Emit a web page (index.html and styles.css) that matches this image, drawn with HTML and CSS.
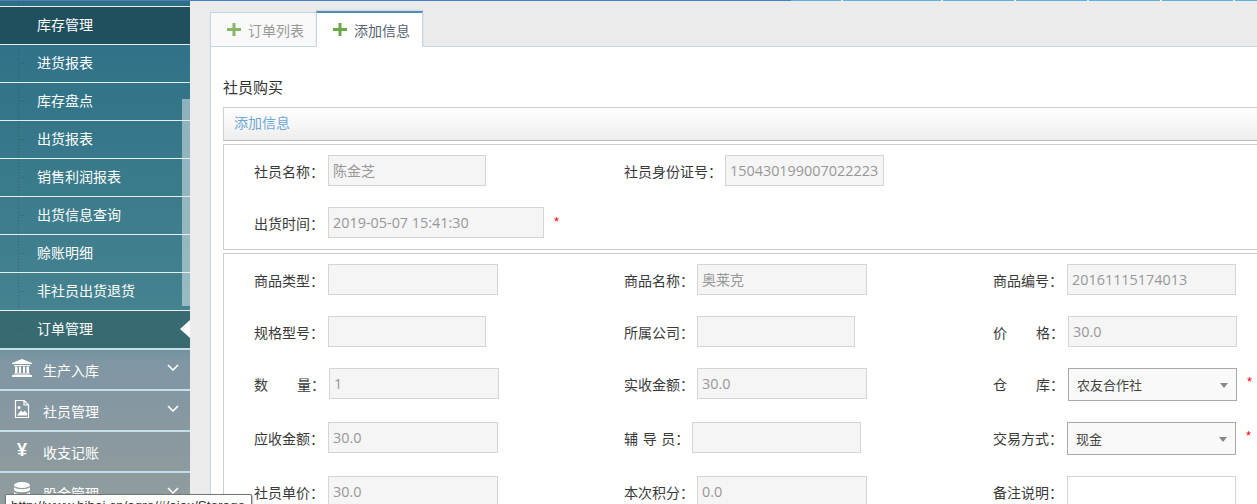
FILE: index.html
```html
<!DOCTYPE html>
<html lang="zh">
<head>
<meta charset="utf-8">
<title>订单管理</title>
<link rel="stylesheet" href="styles.css">
</head>
<body>
<div class="topline">
  <i class="seg seg-main"></i><i class="seg seg-a"></i><i class="seg seg-b"></i><i class="seg seg-c"></i><i class="seg seg-c"></i><i class="seg seg-c"></i><i class="seg seg-c"></i><i class="seg seg-d"></i>
</div>
<div class="app">
  <aside class="sidebar">
    <span class="dotline"></span>
    <span class="scroll"></span>
    <a class="sub sub-cut"></a>
    <a class="sub sub-dark">库存管理</a>
    <a class="sub">进货报表</a>
    <a class="sub">库存盘点</a>
    <a class="sub">出货报表</a>
    <a class="sub">销售利润报表</a>
    <a class="sub">出货信息查询</a>
    <a class="sub">赊账明细</a>
    <a class="sub">非社员出货退货</a>
    <a class="sub sub-active">订单管理</a>
    <a class="group">
      <svg class="gicon" viewBox="0 0 20 18"><path d="M10 0 L20 4 V5 H0 V4 Z M2 6 H18 V7 H2 Z M3 7.5 H5.5 V14 H3 Z M7 7.5 H9 V14 H7 Z M11 7.5 H13 V14 H11 Z M14.5 7.5 H17 V14 H14.5 Z M2 14.5 H18 V15.5 H2 Z M0 16 H20 V18 H0 Z" fill="#fff"/></svg>
      <span>生产入库</span>
      <svg class="chev" viewBox="0 0 12 7"><path d="M1 1 L6 6 L11 1" fill="none" stroke="#fff" stroke-width="1.6"/></svg>
    </a>
    <a class="group">
      <svg class="gicon" viewBox="0 0 20 18"><path d="M3.500 .5 H12 L16.500 5 V17.500 H3.500 Z M12 .5 V5 H16.500" fill="none" stroke="#fff" stroke-width="1.200"/><circle cx="7" cy="7.500" r="1.600" fill="#fff"/><path d="M5 15.500 L9 10.500 L11 12.500 L12.500 10.500 L15 13 V15.500 Z" fill="#fff"/></svg>
      <span>社员管理</span>
      <svg class="chev" viewBox="0 0 12 7"><path d="M1 1 L6 6 L11 1" fill="none" stroke="#fff" stroke-width="1.600"/></svg>
    </a>
    <a class="group">
      <span class="yen">¥</span>
      <span>收支记账</span>
    </a>
    <a class="group">
      <svg class="gicon" viewBox="0 0 20 18"><ellipse cx="10" cy="3" rx="8" ry="3" fill="#fff"/><path d="M2 5 C4 8 16 8 18 5 V8 C16 11 4 11 2 8 Z M2 10 C4 13 16 13 18 10 V13 C16 16 4 16 2 13 Z" fill="#fff"/></svg>
      <span>股金管理</span>
      <svg class="chev" viewBox="0 0 12 7"><path d="M1 1 L6 6 L11 1" fill="none" stroke="#fff" stroke-width="1.600"/></svg>
    </a>
  </aside>
  <main class="main">
    <nav class="tabs">
      <a class="tab"><svg class="plus" viewBox="0 0 14 13"><path d="M5.500 0 H8.500 V5 H14 V8 H8.500 V13 H5.500 V8 H0 V5 H5.500 Z"/></svg>订单列表</a>
      <a class="tab tab-on"><svg class="plus" viewBox="0 0 14 13"><path d="M5.500 0 H8.500 V5 H14 V8 H8.500 V13 H5.500 V8 H0 V5 H5.500 Z"/></svg>添加信息</a>
    </nav>
    <section class="content">
      <h3 class="title">社员购买</h3>
      <div class="bar">添加信息</div>
      <div class="panel panel-top">
        <div class="row">
          <div class="field"><label>社员名称<i class="co">：</i></label><div class="inp inp-cjk w158">陈金芝</div></div>
          <div class="field"><label class="lb-101">社员身份证号<i class="co">：</i></label><div class="inp w159">150430199007022223</div></div>
        </div>
        <div class="row">
          <div class="field"><label>出货时间<i class="co">：</i></label><div class="inp w216">2019-05-07 15:41:30</div><b class="star">*</b></div>
        </div>
      </div>
      <div class="panel panel-goods">
        <div class="row">
          <div class="field"><label>商品类型<i class="co">：</i></label><div class="inp w170"></div></div>
          <div class="field"><label class="lb-73">商品名称<i class="co">：</i></label><div class="inp inp-cjk w170">奥莱克</div></div>
          <div class="field"><label>商品编号<i class="co">：</i></label><div class="inp w169">20161115174013</div></div>
        </div>
        <div class="row">
          <div class="field"><label>规格型号<i class="co">：</i></label><div class="inp w158"></div></div>
          <div class="field"><label class="lb-73">所属公司<i class="co">：</i></label><div class="inp w158"></div></div>
          <div class="field"><label class="lb-75"><span class="sp">价</span>格<i class="co">：</i></label><div class="inp w169">30.0</div></div>
        </div>
        <div class="row row-wide">
          <div class="field"><label class="lb-75"><span class="sp">数</span>量<i class="co">：</i></label><div class="inp w170">1</div></div>
          <div class="field"><label class="lb-73">实收金额<i class="co">：</i></label><div class="inp w170">30.0</div></div>
          <div class="field"><label class="lb-75"><span class="sp">仓</span>库<i class="co">：</i></label><div class="sel w169">农友合作社<i class="caret"></i></div><b class="star">*</b></div>
        </div>
        <div class="row row-wide">
          <div class="field"><label>应收金额<i class="co">：</i></label><div class="inp w170">30.0</div></div>
          <div class="field"><label class="lb-68 lb-spaced">辅 导 员<i class="co">：</i></label><div class="inp w169"></div></div>
          <div class="field"><label>交易方式<i class="co">：</i></label><div class="sel w169">现金<i class="caret"></i></div><b class="star">*</b></div>
        </div>
        <div class="row row-last">
          <div class="field"><label>社员单价<i class="co">：</i></label><div class="inp w170">30.0</div></div>
          <div class="field"><label class="lb-73">本次积分<i class="co">：</i></label><div class="inp w170">0.0</div></div>
          <div class="field"><label>备注说明<i class="co">：</i></label><div class="inp inp-white w169"></div></div>
        </div>
      </div>
    </section>
  </main>
</div>
<div class="tooltip">http://www.hibai.cn/agro/#/ajax/Storage</div>
</body>
</html>
```
FILE: styles.css
```css
* { box-sizing: border-box; }
html, body { margin: 0; height: 504px; overflow: hidden; }
body {
  position: relative;
  width: 1257px;
  background: #ebebeb;
  font-family: "Noto Sans CJK SC", "Liberation Sans", sans-serif;
  font-size: 14px;
  color: #393939;
}
.topline { display: flex; height: 1px; }
.seg { display: block; height: 1px; background: #5db1dc; margin-right: 2px; }
.seg-main { width: 791px; background: #4a7ebb; margin-right: 0; }
.seg-a { width: 50px; }
.seg-b { width: 98px; }
.seg-c { width: 71px; }
.seg-d { width: 22px; margin-right: 0; }

.app { display: flex; height: 503px; overflow: hidden; }

.sidebar {
  position: relative;
  flex: none;
  width: 190px;
  height: 503px;
  overflow: hidden;
  background: linear-gradient(180deg, #2d6f86 0, #37798a 150px, #458290 305px, #7f96a4 360px, #8a999f 440px, #919d9e 503px);
}
.dotline {
  position: absolute;
  left: 18px; top: 0;
  width: 1px; height: 347px;
  background: repeating-linear-gradient(180deg, rgba(28,68,82,.4) 0 1px, transparent 1px 3px);
}
.scroll {
  position: absolute;
  left: 182px; top: 98px;
  width: 8px; height: 207px;
  background: rgba(255,255,255,.45);
}
.sub {
  position: relative;
  display: block;
  height: 38px;
  line-height: 34px;
  padding-left: 37px;
  color: #fff;
  font-size: 14px;
  border-bottom: 1px solid #e6eef0;
}
.sub::before {
  content: "";
  position: absolute;
  left: 20px; top: 18px;
  width: 8px; height: 1px;
  background: repeating-linear-gradient(90deg, rgba(28,68,82,.4) 0 1px, transparent 1px 3px);
}
.sub-cut { height: 6px; }
.sub-cut::before { display: none; }
.sub-dark { background: #204f5e; line-height: 35px; }
.sub-active { background: #386a72; border-bottom: 0; height: 37px; }
.sub-active::after {
  content: "";
  position: absolute;
  right: 0; top: 9px;
  border: 9px solid transparent;
  border-left: 0;
  border-right: 10px solid #fff;
}
.group {
  display: flex;
  align-items: center;
  height: 41px;
  padding: 1px 0 0 12px;
  border-top: 2px solid #c4dfea;
  color: #fff;
  font-size: 14px;
  position: relative;
}
.group > span:not(.yen) { margin-left: 11px; }
.gicon { width: 20px; height: 18px; flex: none; margin-top: -5px; }
.yen {
  width: 20px;
  flex: none;
  text-align: center;
  font: bold 18px "Liberation Sans", sans-serif;
  margin-top: -3px;
}
.chev { position: absolute; left: 167px; top: 14px; width: 12px; height: 7px; }

.main { flex: none; width: 1067px; padding-left: 20px; overflow: hidden; }
.tabs { display: flex; height: 46px; padding: 10px 0 0 0; border-bottom: 1px solid #c5d4e4; align-items: flex-end; }
.tab {
  display: flex;
  align-items: center;
  height: 35px;
  width: 106px;
  margin-bottom: -1px;
  padding-left: 16px;
  background: #f9f9f9;
  border: 1px solid #c5d4e4;
  border-right: 0;
  color: #999;
  font-size: 14px;
}
.tab-on {
  width: 107px;
  height: 36px;
  background: #fff;
  color: #576373;
  border-top: 2px solid #4c8fbd;
  border-left: 1px solid #c5d4e4;
  border-right: 1px solid #c5d4e4;
  border-bottom: 1px solid #fff;
  padding-left: 16px;
  box-shadow: 0 -1px 2px rgba(0,0,0,.1);
}
.plus { width: 14px; height: 13px; margin-right: 7px; fill: #8ab667; }
.tab-on .plus { fill: #69aa46; }

.content {
  width: 1100px;
  height: 457px;
  padding: 0 0 0 12px;
  background: #fff;
  border-left: 1px solid #c5d4e4;
}
.title { margin: 0; padding-top: 30px; height: 60px; font-weight: 400; font-size: 15px; line-height: 20px; color: #333; }
.bar {
  height: 34px;
  line-height: 29px;
  padding-left: 10px;
  border: 1px solid #cfcfcf;
  border-bottom-color: #bbb;
  background: linear-gradient(180deg, #fff, #eeeeee);
  color: #6ea8d6;
  font-size: 14px;
}
.panel { margin-top: 3px; border: 1px solid #ccc; padding-left: 30px; }
.panel-top { height: 106px; padding-top: 10px; }
.panel-goods { height: 251px; padding-top: 10px; border-bottom: 0; overflow: hidden; }
.row { display: grid; grid-template-columns: 370px 369px 1fr; height: 52px; }
.row-wide { height: 54px; }
.row-last { height: 28px; overflow: hidden; }
.field { display: flex; align-items: flex-start; }
label { flex: none; width: 74px; height: 31px; line-height: 32px; font-size: 14px; color: #393939; white-space: nowrap; }
.co { font-style: normal; font-family: "Noto Sans CJK TC", sans-serif; }
.lb-73 { width: 73px; }
.lb-75 { width: 75px; }
.lb-68 { width: 68px; }
.lb-101 { width: 101px; }
.lb-spaced { word-spacing: 1.500px; }
.sp { display: inline-block; width: 43px; }
.inp {
  flex: none;
  height: 31px;
  line-height: 29px;
  padding-left: 4px;
  border: 1px solid #d5d5d5;
  background: #f5f5f5;
  color: #989898;
  font-family: "Open Sans", "Liberation Sans", "Noto Sans CJK SC", sans-serif;
  font-size: 14.400px;
  white-space: nowrap;
  overflow: hidden;
}
.inp-cjk { font-family: "Noto Sans CJK SC", sans-serif; font-size: 14px; }
.inp-white { background: #fff; height: 40px; }
.w158 { width: 158px; }
.w159 { width: 159px; }
.w169 { width: 169px; }
.w170 { width: 170px; }
.w216 { width: 216px; }
.sel {
  position: relative;
  flex: none;
  height: 33px;
  line-height: 32px;
  padding-left: 8px;
  border: 1px solid #a9a9a9;
  background: #f9f9f9;
  color: #444;
  font-size: 13px;
}
.caret {
  position: absolute;
  right: 8px; top: 14px;
  border: 4.500px solid transparent;
  border-top: 5px solid #888;
  border-bottom: 0;
}
.star { margin: 7px 0 0 10px; color: #f00; font: 400 13px/14px "Liberation Sans", sans-serif; }
.panel-top .star { margin-top: 8px; }

.tooltip {
  position: absolute;
  left: 5px; top: 494px;
  width: 247px; height: 10px;
  padding: 3px 0 0 5px;
  background: #fff;
  border: 1px solid #767676;
  border-bottom: 0;
  border-radius: 2px 2px 0 0;
  box-shadow: 1px 1px 2px rgba(0,0,0,.3);
  font: 13.500px/16px "Liberation Sans", sans-serif;
  color: #333;
  white-space: nowrap;
  overflow: hidden;
}
```
